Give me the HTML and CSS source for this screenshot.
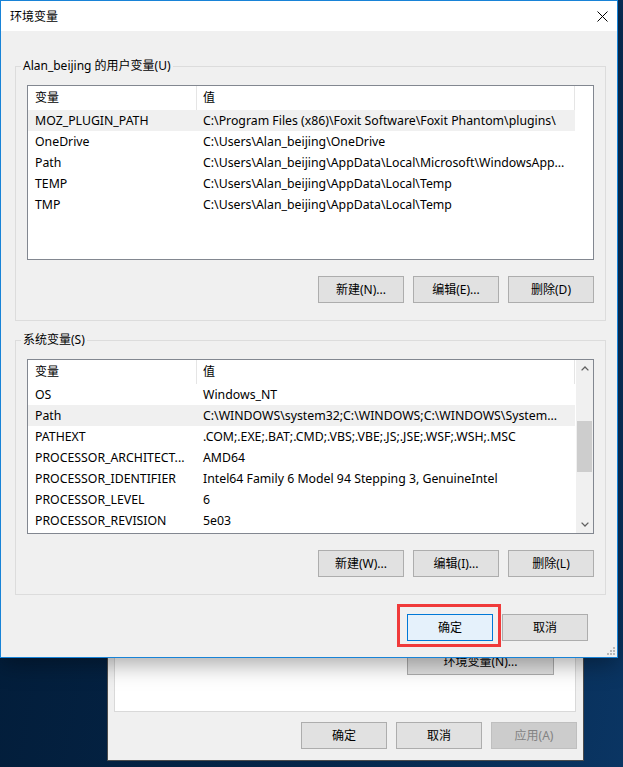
FILE: index.html
```html
<!DOCTYPE html>
<html lang="zh-CN">
<head>
<meta charset="utf-8">
<title>环境变量</title>
<link rel="stylesheet" href="styles.css">
</head>
<body>
<div class="desktop">
  <div class="bgwin">
    <div class="bg-panel">
      <div class="bg-panel-row"><button class="btn wide">环境变量(N)...</button></div>
    </div>
    <div class="bg-actions">
      <button class="btn">确定</button>
      <button class="btn">取消</button>
      <button class="btn disabled">应用(A)</button>
    </div>
  </div>

  <div class="mainwin">
    <div class="titlebar">
      <span class="title">环境变量</span>
      <svg class="close" width="11" height="11" viewBox="0 0 11 11"><path d="M0.5 0.5 L10.5 10.5 M10.5 0.5 L0.5 10.5" stroke="#000" stroke-width="1" fill="none"/></svg>
    </div>
    <div class="content">
      <section class="group">
        <div class="group-label">Alan_beijing 的用户变量(U)</div>
        <div class="list">
          <div class="cols">
            <div class="row head"><div class="c1">变量</div><div class="c2">值</div></div>
            <div class="row sel"><div class="c1">MOZ_PLUGIN_PATH</div><div class="c2">C:\Program Files (x86)\Foxit Software\Foxit Phantom\plugins\</div></div>
            <div class="row"><div class="c1">OneDrive</div><div class="c2">C:\Users\Alan_beijing\OneDrive</div></div>
            <div class="row"><div class="c1">Path</div><div class="c2">C:\Users\Alan_beijing\AppData\Local\Microsoft\WindowsApp...</div></div>
            <div class="row"><div class="c1">TEMP</div><div class="c2">C:\Users\Alan_beijing\AppData\Local\Temp</div></div>
            <div class="row"><div class="c1">TMP</div><div class="c2">C:\Users\Alan_beijing\AppData\Local\Temp</div></div>
          </div>
        </div>
        <div class="btnrow">
          <button class="btn">新建(N)...</button>
          <button class="btn">编辑(E)...</button>
          <button class="btn">删除(D)</button>
        </div>
      </section>

      <section class="group g2">
        <div class="group-label">系统变量(S)</div>
        <div class="list">
          <div class="cols">
            <div class="row head"><div class="c1">变量</div><div class="c2">值</div></div>
            <div class="row"><div class="c1">OS</div><div class="c2">Windows_NT</div></div>
            <div class="row sel"><div class="c1">Path</div><div class="c2">C:\WINDOWS\system32;C:\WINDOWS;C:\WINDOWS\System...</div></div>
            <div class="row"><div class="c1">PATHEXT</div><div class="c2">.COM;.EXE;.BAT;.CMD;.VBS;.VBE;.JS;.JSE;.WSF;.WSH;.MSC</div></div>
            <div class="row"><div class="c1">PROCESSOR_ARCHITECT...</div><div class="c2">AMD64</div></div>
            <div class="row"><div class="c1">PROCESSOR_IDENTIFIER</div><div class="c2">Intel64 Family 6 Model 94 Stepping 3, GenuineIntel</div></div>
            <div class="row"><div class="c1">PROCESSOR_LEVEL</div><div class="c2">6</div></div>
            <div class="row"><div class="c1">PROCESSOR_REVISION</div><div class="c2">5e03</div></div>
          </div>
          <div class="scrollbar">
            <div class="sb-arrow"><svg width="8" height="5" viewBox="0 0 8 5"><polyline points="0.6,4.4 4,1 7.4,4.4" fill="none" stroke="#606060" stroke-width="1.3"/></svg></div>
            <div class="sb-track"><div class="sb-thumb"></div></div>
            <div class="sb-arrow"><svg width="8" height="5" viewBox="0 0 8 5"><polyline points="0.6,0.6 4,4 7.4,0.6" fill="none" stroke="#606060" stroke-width="1.3"/></svg></div>
          </div>
        </div>
        <div class="btnrow">
          <button class="btn">新建(W)...</button>
          <button class="btn">编辑(I)...</button>
          <button class="btn">删除(L)</button>
        </div>
      </section>

      <div class="actions">
        <div class="ok-wrap"><button class="btn default">确定</button></div>
        <button class="btn">取消</button>
      </div>
    </div>
    <svg class="grip" width="8" height="8" viewBox="0 0 8 8">
      <rect x="6" y="0" width="2" height="2" fill="#b8b8b8"/>
      <rect x="3" y="3" width="2" height="2" fill="#b8b8b8"/>
      <rect x="6" y="3" width="2" height="2" fill="#b8b8b8"/>
      <rect x="0" y="6" width="2" height="2" fill="#b8b8b8"/>
      <rect x="3" y="6" width="2" height="2" fill="#b8b8b8"/>
      <rect x="6" y="6" width="2" height="2" fill="#b8b8b8"/>
    </svg>
  </div>
</div>
</body>
</html>
```

FILE: styles.css
```css
* { box-sizing: border-box; }

body {
  margin: 0;
  font-family: "Noto Sans", "Noto Sans CJK SC", sans-serif;
  font-size: 12px;
  color: #000;
}

.desktop {
  position: relative;
  width: 623px;
  height: 767px;
  overflow: hidden;
  background: linear-gradient(100deg, #021b36 0%, #05264a 60%, #0a3563 100%);
}

/* ---------- background window ---------- */
.bgwin {
  position: absolute;
  left: 107px;
  top: 600px;
  width: 477px;
  height: 161px;
  background: #f0f0f0;
  border: 1px solid #4c4c4c;
  padding: 7px 6px 0 6px;
  display: flex;
  flex-direction: column;
}

.bg-panel {
  width: 462px;
  background: #fff;
  border: 1px solid #d9d9d9;
  padding: 39px 21px 36px 0;
}

.bg-panel-row {
  display: flex;
  justify-content: flex-end;
}

.bg-actions {
  display: flex;
  justify-content: flex-end;
  gap: 9px;
  margin-top: 10px;
}

/* ---------- main window ---------- */
.mainwin {
  position: absolute;
  left: 0;
  top: 0;
  width: 618px;
  height: 658px;
  border: 1px solid #1883d7;
  background: #f0f0f0;
  display: flex;
  flex-direction: column;
  box-shadow: 0 6px 22px rgba(0, 0, 0, 0.35);
}

.titlebar {
  height: 30px;
  flex: none;
  background: #fff;
  display: flex;
  align-items: center;
  justify-content: space-between;
  padding: 0 9px 0 9px;
}

.title {
  font-family: "Noto Sans CJK SC", sans-serif;
  font-size: 12px;
  line-height: 16px;
}

.close { display: block; }

.content {
  flex: 1;
  padding: 35px 11px 0 14px;
}

.group {
  border: 1px solid #dcdcdc;
  padding: 0 11px 17px 11px;
}

.group-label {
  display: table;
  margin: -9px 0 0 -6px;
  padding: 0 2px;
  background: #f0f0f0;
  line-height: 16px;
  font-size: 12px;
}

.g2 { margin-top: 19px; }

.list {
  height: 175px;
  margin-top: 11px;
  background: #fff;
  border: 1px solid #828790;
  display: flex;
  font-size: 12.3px;
}

.cols {
  width: 547px;
  flex: none;
}

.row {
  display: flex;
  height: 21px;
  align-items: center;
  white-space: nowrap;
}

.row.head { height: 24px; }

.row.sel { background: #f0f0f0; }

.c1 {
  width: 169px;
  flex: none;
  padding-left: 7px;
  overflow: hidden;
  text-overflow: ellipsis;
}

.c2 {
  width: 378px;
  flex: none;
  padding-left: 6px;
  padding-right: 4px;
  overflow: hidden;
  text-overflow: ellipsis;
}

.head .c1,
.head .c2 {
  height: 24px;
  line-height: 24px;
  font-size: 12px;
  border-right: 1px solid #e5e5e5;
}

.scrollbar {
  width: 17px;
  flex: none;
  margin-left: auto;
  background: #f0f0f0;
  display: flex;
  flex-direction: column;
}

.sb-arrow {
  height: 17px;
  display: flex;
  align-items: center;
  justify-content: center;
}

.sb-arrow svg { display: block; }

.sb-track {
  flex: 1;
  padding: 44px 1px 0 1px;
}

.sb-thumb {
  height: 51px;
  background: #cdcdcd;
}

.btnrow {
  display: flex;
  justify-content: flex-end;
  gap: 9px;
  margin-top: 16px;
}

.btn {
  width: 86px;
  height: 27px;
  margin: 0;
  padding: 0;
  background: #e1e1e1;
  border: 1px solid #adadad;
  font-family: "Noto Sans", "Noto Sans CJK SC", sans-serif;
  font-size: 12px;
  color: #000;
  line-height: 25px;
  text-align: center;
}

.btn.wide { width: 147px; }

.btn.default {
  background: #e5f1fb;
  border-color: #0078d7;
}

.btn.disabled {
  background: #cccccc;
  border-color: #bfbfbf;
  color: #838383;
}

.actions {
  display: flex;
  justify-content: flex-end;
  gap: 9px;
  margin-top: 19px;
  margin-right: 18px;
}

.ok-wrap { position: relative; }

.ok-wrap::after {
  content: "";
  position: absolute;
  left: -10px;
  top: -10px;
  right: -8px;
  bottom: -6px;
  border: 3px solid #f03a3a;
  pointer-events: none;
}

.grip {
  position: absolute;
  right: 2px;
  bottom: 2px;
}
```
